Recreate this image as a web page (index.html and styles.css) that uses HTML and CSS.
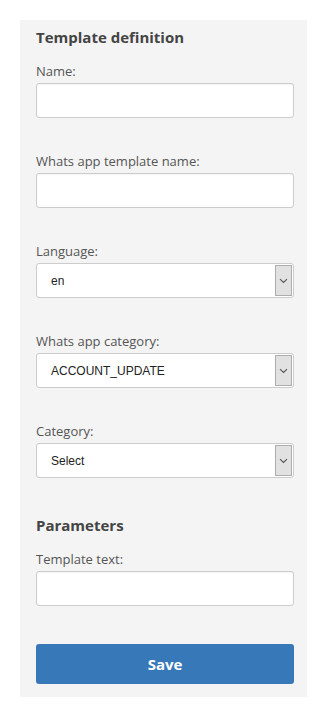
FILE: index.html
```html
<!DOCTYPE html>
<html lang="en">
<head>
<meta charset="utf-8">
<title>Template definition</title>
<link rel="stylesheet" href="styles.css">
</head>
<body>
<form class="panel">
  <h2 class="section-title first">Template definition</h2>
  <div class="field">
    <label class="label" for="name">Name:</label>
    <input class="control" id="name" type="text">
  </div>
  <div class="field">
    <label class="label" for="waname">Whats app template name:</label>
    <input class="control" id="waname" type="text">
  </div>
  <div class="field">
    <label class="label" for="lang">Language:</label>
    <div class="select-wrap">
      <select class="select" id="lang"><option>en</option></select>
      <span class="select-btn"><svg width="9" height="6" viewBox="0 0 9 6"><path d="M1 1.2 L4.5 4.5 L8 1.2" fill="none" stroke="#555" stroke-width="1.1"/></svg></span>
    </div>
  </div>
  <div class="field">
    <label class="label" for="wacat">Whats app category:</label>
    <div class="select-wrap">
      <select class="select" id="wacat"><option>ACCOUNT_UPDATE</option></select>
      <span class="select-btn"><svg width="9" height="6" viewBox="0 0 9 6"><path d="M1 1.2 L4.5 4.5 L8 1.2" fill="none" stroke="#555" stroke-width="1.1"/></svg></span>
    </div>
  </div>
  <div class="field">
    <label class="label" for="cat">Category:</label>
    <div class="select-wrap">
      <select class="select" id="cat"><option>Select</option></select>
      <span class="select-btn"><svg width="9" height="6" viewBox="0 0 9 6"><path d="M1 1.2 L4.5 4.5 L8 1.2" fill="none" stroke="#555" stroke-width="1.1"/></svg></span>
    </div>
  </div>
  <h2 class="section-title second">Parameters</h2>
  <div class="field">
    <label class="label" for="ttext">Template text:</label>
    <input class="control" id="ttext" type="text">
  </div>
  <button class="save" type="button">Save</button>
</form>
</body>
</html>
```
FILE: styles.css
```css
html, body {
  margin: 0;
  padding: 0;
  background: #ffffff;
}
body {
  padding: 20px;
  font-family: "Open Sans", "Liberation Sans", sans-serif;
  color: #555555;
}
.panel {
  box-sizing: border-box;
  width: 287px;
  background: #f4f4f4;
  padding: 1px 13px 13px 16px;
  display: flow-root;
}
.section-title {
  font-size: 15px;
  line-height: 21px;
  font-weight: 700;
  color: #444444;
  margin: 0 0 14px;
}
.section-title.first {
  margin-top: 6px;
}
.section-title.second {
  margin-top: 37px;
}
.field {
  margin-bottom: 34px;
}
.label {
  display: block;
  font-size: 13px;
  line-height: 18px;
  margin-bottom: 3px;
  color: #555555;
}
.control {
  display: block;
  box-sizing: border-box;
  width: 100%;
  height: 35px;
  border: 1px solid #cccccc;
  border-radius: 3px;
  background: #ffffff;
  margin: 0;
  padding: 0 14px;
  font-family: "Liberation Sans", Arial, sans-serif;
  font-size: 12px;
  box-shadow: inset 0 1px 1px rgba(0,0,0,0.04);
}
.select-wrap {
  box-sizing: border-box;
  height: 35px;
  display: flex;
  align-items: stretch;
  border: 1px solid #cccccc;
  border-radius: 3px;
  background: #ffffff;
  overflow: hidden;
}
.select {
  flex: 1;
  min-width: 0;
  appearance: none;
  -webkit-appearance: none;
  border: 0;
  background: transparent;
  margin: 0;
  padding: 0 0 0 14px;
  font-family: "Liberation Sans", Arial, sans-serif;
  font-size: 12px;
  color: #222222;
  outline: none;
}
.select-btn {
  width: 15px;
  margin: 1px 1px 1px 0;
  background: #e1e1e1;
  border: 1px solid #adadad;
  display: flex;
  align-items: center;
  justify-content: center;
}
.save {
  display: block;
  width: 100%;
  height: 40px;
  margin-top: 38px;
  border: 0;
  border-radius: 3px;
  background: #3778b9;
  color: #ffffff;
  font-family: "Open Sans", "Liberation Sans", sans-serif;
  font-size: 15px;
  font-weight: 700;
  cursor: pointer;
}
```
